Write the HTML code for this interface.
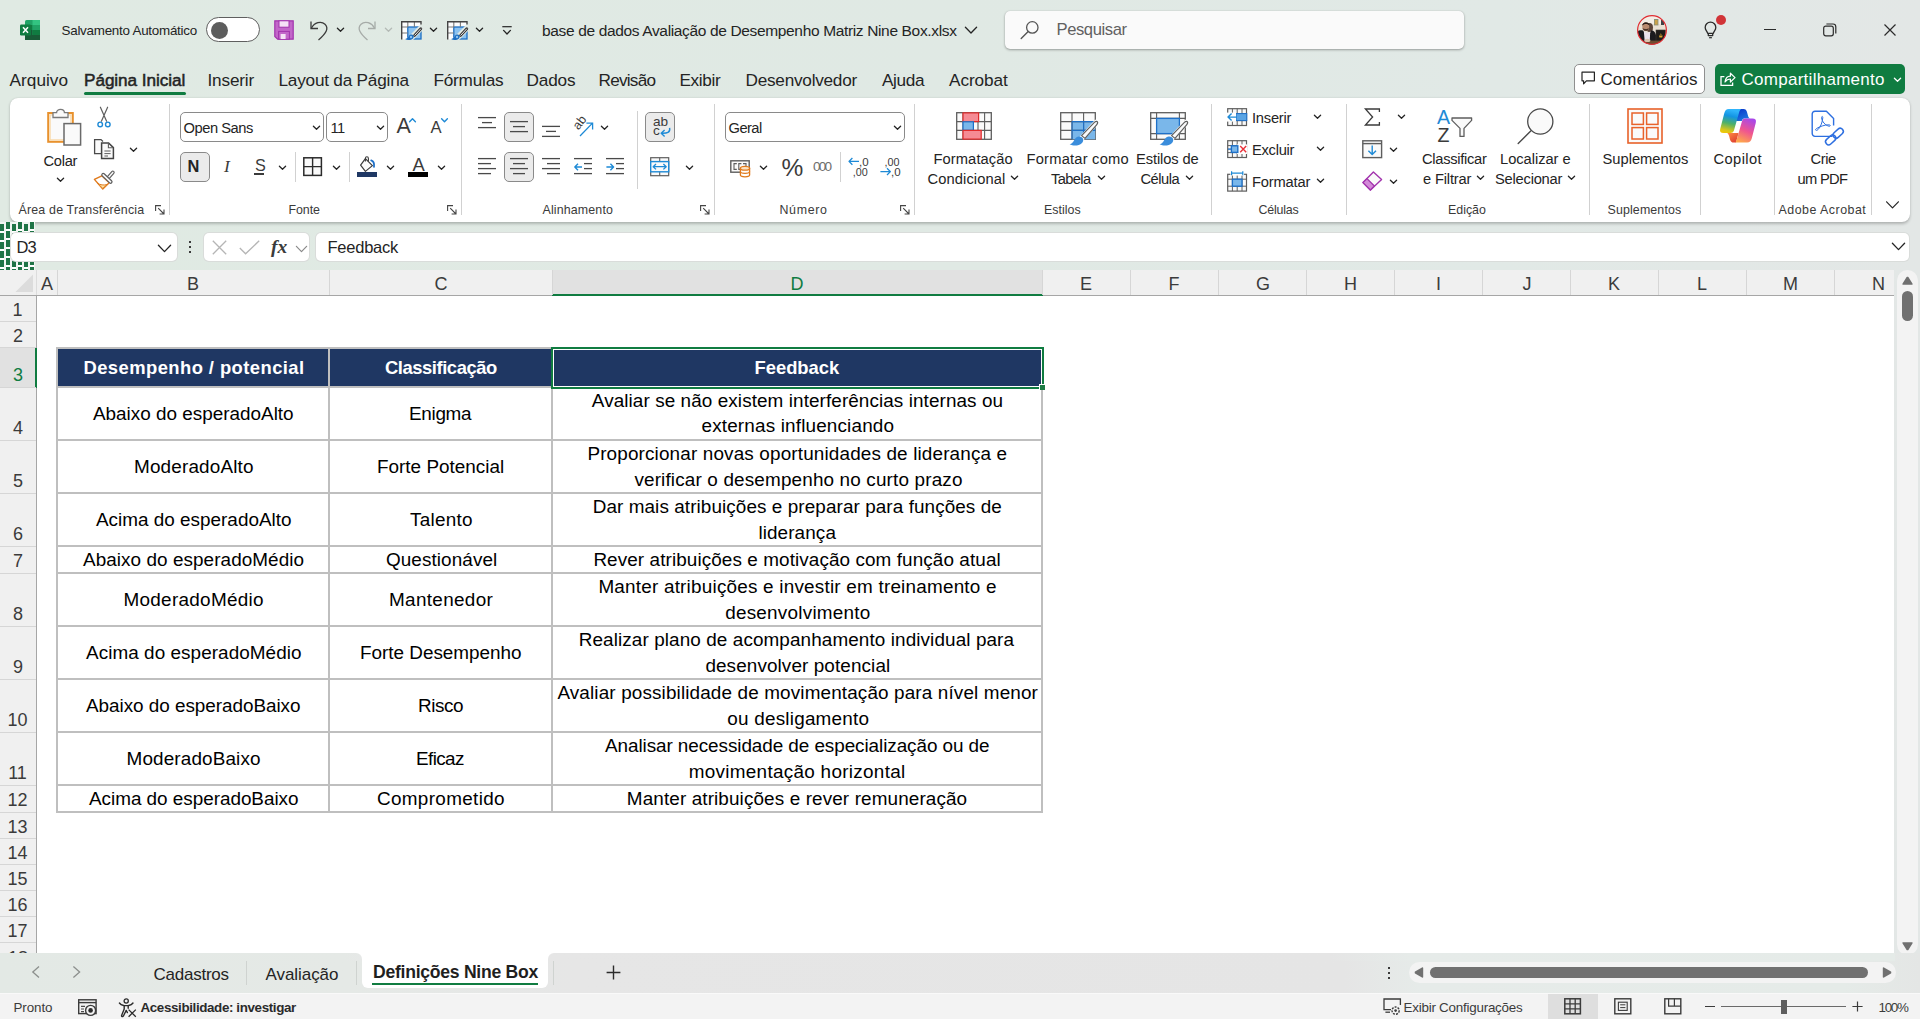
<!doctype html>
<html lang="pt-BR">
<head>
<meta charset="utf-8">
<title>base de dados Avaliação de Desempenho Matriz Nine Box.xlsx - Excel</title>
<style>
html,body{margin:0;padding:0}
body{width:1920px;height:1019px;overflow:hidden;position:relative;font-family:"Liberation Sans",sans-serif;color:#242424;}
.a{position:absolute;box-sizing:border-box}
.t{position:absolute;white-space:pre;line-height:1}
svg{overflow:visible}
</style>
</head>
<body>
<div class="a" style="left:0;top:0;width:1920px;height:1019px;background:linear-gradient(90deg,#e0eae3 0%,#e0e9e4 50%,#e1e9e6 78%,#e3e7e6 100%)"></div>
<header id="titlebar">
<svg class="a" style="left:20px;top:20px;" width="20" height="20" viewBox="0 0 20 20"><rect x="5" y="0" width="15" height="20" rx="1.6" fill="#21a366"/>
<rect x="12.5" y="0" width="7.5" height="5" fill="#33c481"/><rect x="5" y="5" width="7.5" height="5" fill="#107c41"/><rect x="12.5" y="5" width="7.5" height="5" fill="#21a366"/>
<rect x="5" y="10" width="7.5" height="5" fill="#185c37"/><rect x="12.5" y="10" width="7.5" height="5" fill="#107c41"/><rect x="5" y="15" width="15" height="5" fill="#185c37"/>
<rect x="0" y="4.5" width="11" height="11" rx="1.2" fill="#107c41"/>
<path d="M3 7.2 L8 12.8 M8 7.2 L3 12.8" stroke="#fff" stroke-width="1.5" fill="none"/></svg>
<span class="t" style="left:61.50px;top:24.30px;font-size:13.4px;letter-spacing:-0.249px;">Salvamento Automático</span>
<div class="a" style="left:206px;top:17px;width:54px;height:25px;border-radius:13px;border:1px solid #5f5f5f;background:#fff"></div>
<div class="a" style="left:210.5px;top:21.5px;width:17px;height:17px;border-radius:50%;background:#5d5d5d"></div>
<svg class="a" style="left:274px;top:20px;" width="20" height="20" viewBox="0 0 20 20"><path d="M0.8 0.8 H19.2 V19.2 H3.6 L0.8 16.4 Z" fill="#c266c9" stroke="#a233ad" stroke-width="1.2"/>
<rect x="5" y="0.8" width="10" height="6.4" fill="#f5e1f6" stroke="#a233ad" stroke-width="1"/>
<rect x="4.6" y="11.4" width="10.8" height="7.8" fill="#c266c9" stroke="#a233ad" stroke-width="1"/>
<rect x="6.6" y="14" width="5" height="5" fill="#f5e1f6"/></svg>
<svg class="a" style="left:309px;top:19px;" width="20" height="22" viewBox="0 0 20 22"><path d="M2 2.5 V9.5 H9" fill="none" stroke="#3b3b3b" stroke-width="1.3"/><path d="M2.4 9.2 C5.5 3.5 12 1.6 16 5.2 C20 9.2 17.5 14 9.5 21" fill="none" stroke="#3b3b3b" stroke-width="1.3"/></svg>
<svg class="a" style="left:337px;top:28px;" width="7" height="3.6" viewBox="0 0 7 3.6"><path d="M0.4 0.3 L3.5 3.2 L6.6 0.3" fill="none" stroke="#242424" stroke-width="1.3" stroke-linecap="round" stroke-linejoin="round"/></svg>
<svg class="a" style="left:357px;top:19px;" width="20" height="22" viewBox="0 0 20 22"><path d="M18 2.5 V9.5 H11" fill="none" stroke="#a6aba8" stroke-width="1.3"/><path d="M17.6 9.2 C14.5 3.5 8 1.6 4 5.2 C0 9.2 2.5 14 10.5 21" fill="none" stroke="#a6aba8" stroke-width="1.3"/></svg>
<svg class="a" style="left:385px;top:28px;" width="7" height="3.6" viewBox="0 0 7 3.6"><path d="M0.4 0.3 L3.5 3.2 L6.6 0.3" fill="none" stroke="#b4bab6" stroke-width="1.3" stroke-linecap="round" stroke-linejoin="round"/></svg>
<svg class="a" style="left:401px;top:21px;" width="21" height="20" viewBox="0 0 21 20"><rect x="0.6" y="0.6" width="19.4" height="17.6" fill="#fdfdfd"/>
<rect x="6.8" y="6" width="13.2" height="12" fill="#8cc3f0" stroke="#1b6ec2" stroke-width="1.3"/>
<path d="M0.7 6 H6.8 M0.7 12 H6.8 M6.8 0.7 V6 M13.4 0.7 V6" stroke="#7a7a7a" stroke-width="1.1" fill="none"/>
<path d="M0.7 18.4 V0.7 H20 V5.4" stroke="#444" stroke-width="1.4" fill="none"/>
<path d="M22 5 L5.6 21.4" stroke="#e0e9e4" stroke-width="5.6"/>
<path d="M19.8 7.8 L13.6 14.4" stroke="#333" stroke-width="2.8" stroke-linecap="round"/><path d="M19.6 8 L13.8 14.2" stroke="#fff" stroke-width="0.9" stroke-linecap="round"/>
<path d="M4 18 C7.4 18 6.8 14.2 10 13.6 C12.6 13.4 13.6 16 12 17.4 C9.8 19.4 6.4 19.4 4 18 Z" fill="#1b6ec2"/><circle cx="10" cy="16" r="1.2" fill="#8cc3f0"/></svg>
<svg class="a" style="left:430px;top:28px;" width="7" height="3.6" viewBox="0 0 7 3.6"><path d="M0.4 0.3 L3.5 3.2 L6.6 0.3" fill="none" stroke="#242424" stroke-width="1.3" stroke-linecap="round" stroke-linejoin="round"/></svg>
<svg class="a" style="left:447px;top:21px;" width="21" height="20" viewBox="0 0 21 20"><rect x="0.6" y="0.6" width="19.4" height="17.6" fill="#fdfdfd"/>
<rect x="6.8" y="6" width="13.2" height="12" fill="#8cc3f0" stroke="#1b6ec2" stroke-width="1.3"/>
<path d="M0.7 6 H6.8 M0.7 12 H6.8 M6.8 0.7 V6 M13.4 0.7 V6" stroke="#7a7a7a" stroke-width="1.1" fill="none"/>
<path d="M0.7 18.4 V0.7 H20 V5.4" stroke="#444" stroke-width="1.4" fill="none"/>
<path d="M22 5 L5.6 21.4" stroke="#e0e9e4" stroke-width="5.6"/>
<path d="M19.8 7.8 L13.6 14.4" stroke="#333" stroke-width="2.8" stroke-linecap="round"/><path d="M19.6 8 L13.8 14.2" stroke="#fff" stroke-width="0.9" stroke-linecap="round"/>
<path d="M4 18 C7.4 18 6.8 14.2 10 13.6 C12.6 13.4 13.6 16 12 17.4 C9.8 19.4 6.4 19.4 4 18 Z" fill="#1b6ec2"/><circle cx="10" cy="16" r="1.2" fill="#8cc3f0"/></svg>
<svg class="a" style="left:476px;top:28px;" width="7" height="3.6" viewBox="0 0 7 3.6"><path d="M0.4 0.3 L3.5 3.2 L6.6 0.3" fill="none" stroke="#242424" stroke-width="1.3" stroke-linecap="round" stroke-linejoin="round"/></svg>
<svg class="a" style="left:502px;top:26px;" width="10" height="10" viewBox="0 0 10 10"><path d="M0.3 0.7 H9.7" stroke="#242424" stroke-width="1.2"/><path d="M1.6 4.4 L5 8 L8.4 4.4" fill="none" stroke="#242424" stroke-width="1.3" stroke-linecap="round" stroke-linejoin="round"/></svg>
<span class="t" style="left:542.00px;top:23.00px;font-size:15.5px;letter-spacing:-0.350px;">base de dados Avaliação de Desempenho Matriz Nine Box.xlsx</span>
<svg class="a" style="left:964.5px;top:27px;" width="12" height="6.4" viewBox="0 0 12 6.4"><path d="M0.4 0.3 L6.0 6.0 L11.6 0.3" fill="none" stroke="#242424" stroke-width="1.3" stroke-linecap="round" stroke-linejoin="round"/></svg>
<div class="a" style="left:1005px;top:11px;width:459px;height:38px;border-radius:5px;background:#fafafa;box-shadow:0 1px 2.5px rgba(0,0,0,.32),0 0 1px rgba(0,0,0,.18)"></div>
<svg class="a" style="left:1020px;top:20px;" width="20" height="20" viewBox="0 0 20 20"><circle cx="12.3" cy="7.4" r="5.7" fill="none" stroke="#555" stroke-width="1.3"/><path d="M8.2 11.6 L1.2 18.6" stroke="#555" stroke-width="1.4" stroke-linecap="round"/></svg>
<span class="t" style="left:1056.50px;top:22.20px;font-size:16.6px;color:#616161;letter-spacing:-0.408px;">Pesquisar</span>
<svg class="a" style="left:1637px;top:15px;" width="30" height="30" viewBox="0 0 30 30"><defs><clipPath id="avc"><circle cx="15" cy="15" r="14.4"/></clipPath></defs>
<g clip-path="url(#avc)"><rect width="30" height="30" fill="#e9e1d4"/>
<rect x="0" y="0" width="30" height="9" fill="#f3eee6"/>
<rect x="17" y="4" width="4.4" height="6.4" fill="#8a8f7a"/><rect x="17.8" y="5" width="2.8" height="4.6" fill="#c9a24a"/><rect x="24" y="5" width="3" height="5" fill="#3d4347"/>
<ellipse cx="12.6" cy="12.6" rx="3.4" ry="4.6" fill="#5a4338"/>
<path d="M-1 30 V17.5 C1 15.4 4 15 6 15.6 L11 22 L14.4 15.2 C17 15.6 18.4 17.4 19 20 V30 Z" fill="#1b1b1e"/>
<path d="M6.8 16 L8 30 H12.6 L13.2 16.4 C11 18.2 8.8 18 6.8 16 Z" fill="#ebe3ec"/>
<ellipse cx="8.8" cy="11.8" rx="3.5" ry="4.3" fill="#b98a6e"/>
<path d="M5.2 10.8 C4.8 6.4 12.6 5.8 12.4 10.6 C11 8.6 7 8.4 5.2 10.8 Z" fill="#2a1d18"/>
<path d="M5.6 13 C6.4 16.8 11.2 16.8 12 13 C10.6 14.4 7 14.4 5.6 13 Z" fill="#4a3328"/>
<rect x="19" y="15" width="9.4" height="12" fill="#1e1c19" stroke="#3a362f" stroke-width=".6"/>
<path d="M22 20.6 H25.6 L25.2 22.4 H22.4 Z M22.6 19.4 L23.8 18.4 L25 19.4 Z" fill="#d6a332"/>
<rect x="8" y="25.6" width="22" height="5" fill="#6d4b30"/><ellipse cx="10.4" cy="25.4" rx="3" ry="1.7" fill="#d9c4b0"/></g>
<circle cx="15" cy="15" r="14.4" fill="none" stroke="#e02d33" stroke-width="1.2"/></svg>
<svg class="a" style="left:1704px;top:21px;" width="14" height="18" viewBox="0 0 14 18"><path d="M6.5 1.2 C3.4 1.2 1.2 3.6 1.2 6.4 C1.2 8.8 2.8 10 3.8 12.4 H9.2 C10.2 10 11.8 8.8 11.8 6.4 C11.8 3.6 9.6 1.2 6.5 1.2 Z M4.3 12.4 V14.6 H8.7 V12.4" fill="none" stroke="#2b2b2b" stroke-width="1.3" stroke-linejoin="round"/><path d="M5.1 16.7 H7.9" stroke="#2b2b2b" stroke-width="1.2"/></svg>
<div class="a" style="left:1716px;top:15px;width:10px;height:10px;border-radius:50%;background:#d13438"></div>
<div class="a" style="left:1764px;top:29px;width:12px;height:1.2px;background:#2b2b2b;"></div>
<svg class="a" style="left:1823px;top:23px;" width="14" height="14" viewBox="0 0 14 14"><rect x="0.7" y="3.2" width="9.6" height="9.6" rx="2" fill="none" stroke="#2b2b2b" stroke-width="1.2"/><path d="M3.4 1 H10 Q12.8 1 12.8 3.8 V10.4" fill="none" stroke="#2b2b2b" stroke-width="1.2"/></svg>
<svg class="a" style="left:1884px;top:24px;" width="12" height="12" viewBox="0 0 12 12"><path d="M0.5 0.5 L11.5 11.5 M11.5 0.5 L0.5 11.5" stroke="#2b2b2b" stroke-width="1.2"/></svg>
</header>
<nav id="ribbon-tabs">
<span class="t" style="left:9.50px;top:72.00px;font-size:17.2px;letter-spacing:0.047px;">Arquivo</span>
<span class="t" style="left:84.00px;top:72.00px;font-size:17.2px;letter-spacing:-0.071px;-webkit-text-stroke:0.5px #242424;">Página Inicial</span>
<span class="t" style="left:207.50px;top:72.00px;font-size:17.2px;letter-spacing:-0.171px;">Inserir</span>
<span class="t" style="left:278.50px;top:72.00px;font-size:17.2px;letter-spacing:-0.215px;">Layout da Página</span>
<span class="t" style="left:433.50px;top:72.00px;font-size:17.2px;letter-spacing:-0.219px;">Fórmulas</span>
<span class="t" style="left:526.50px;top:72.00px;font-size:17.2px;letter-spacing:-0.147px;">Dados</span>
<span class="t" style="left:598.50px;top:72.00px;font-size:17.2px;letter-spacing:-0.756px;">Revisão</span>
<span class="t" style="left:679.50px;top:72.00px;font-size:17.2px;letter-spacing:-0.351px;">Exibir</span>
<span class="t" style="left:745.50px;top:72.00px;font-size:17.2px;letter-spacing:-0.244px;">Desenvolvedor</span>
<span class="t" style="left:882.00px;top:72.00px;font-size:17.2px;letter-spacing:-0.350px;">Ajuda</span>
<span class="t" style="left:949.00px;top:72.00px;font-size:17.2px;letter-spacing:-0.076px;">Acrobat</span>
<div class="a" style="left:84px;top:91.5px;width:102px;height:3px;border-radius:1.5px;background:#107c41"></div>
<div class="a" style="left:1574px;top:64px;width:131px;height:30px;border-radius:5px;background:#fff;border:1px solid #8f8f8f"></div>
<svg class="a" style="left:1581px;top:71px;" width="15" height="15" viewBox="0 0 15 15"><path d="M1 1.2 H13.4 V9.8 H5.4 L2.6 12.8 V9.8 H1 Z" fill="none" stroke="#242424" stroke-width="1.2" stroke-linejoin="round"/></svg>
<span class="t" style="left:1600.50px;top:71.10px;font-size:17px;letter-spacing:0.063px;">Comentários</span>
<div class="a" style="left:1715px;top:64px;width:190px;height:30px;border-radius:5px;background:#107c41"></div>
<svg class="a" style="left:1720px;top:70px;" width="16" height="17" viewBox="0 0 16 17"><path d="M4.4 6.6 H1 V15.4 H12.6 V12.4" fill="none" stroke="#fff" stroke-width="1.3"/><path d="M5 12 C5.6 8 8 6.2 10.4 6.2 V3.2 L15 7.6 L10.4 12 V9 C8 9 6.4 10 5 12 Z" fill="none" stroke="#fff" stroke-width="1.2" stroke-linejoin="round"/></svg>
<span class="t" style="left:1741.50px;top:71.10px;font-size:17px;color:#fff;letter-spacing:0.271px;">Compartilhamento</span>
<svg class="a" style="left:1893.5px;top:77.5px;" width="7" height="3.6" viewBox="0 0 7 3.6"><path d="M0.4 0.3 L3.5 3.2 L6.6 0.3" fill="none" stroke="#fff" stroke-width="1.3" stroke-linecap="round" stroke-linejoin="round"/></svg>
</nav>
<section id="ribbon">
<div class="a" style="left:10px;top:98px;width:1900px;height:124px;border-radius:8px;background:#fff;box-shadow:0 1.5px 3px rgba(0,0,0,.22),0 0 1px rgba(0,0,0,.12)"></div>
<div class="a" style="left:169px;top:104px;width:1px;height:111px;background:#d1d1d1;"></div>
<div class="a" style="left:461px;top:104px;width:1px;height:111px;background:#d1d1d1;"></div>
<div class="a" style="left:714px;top:104px;width:1px;height:111px;background:#d1d1d1;"></div>
<div class="a" style="left:914px;top:104px;width:1px;height:111px;background:#d1d1d1;"></div>
<div class="a" style="left:1211px;top:104px;width:1px;height:111px;background:#d1d1d1;"></div>
<div class="a" style="left:1346px;top:104px;width:1px;height:111px;background:#d1d1d1;"></div>
<div class="a" style="left:1589px;top:104px;width:1px;height:111px;background:#d1d1d1;"></div>
<div class="a" style="left:1700px;top:104px;width:1px;height:111px;background:#d1d1d1;"></div>
<div class="a" style="left:1774px;top:104px;width:1px;height:111px;background:#d1d1d1;"></div>
<div class="a" style="left:1871px;top:104px;width:1px;height:111px;background:#d1d1d1;"></div>
<div class="a" style="left:295px;top:152px;width:1px;height:30px;background:#d1d1d1;"></div>
<div class="a" style="left:349px;top:152px;width:1px;height:30px;background:#d1d1d1;"></div>
<div class="a" style="left:637px;top:111px;width:1px;height:78px;background:#d1d1d1;"></div>
<div class="a" style="left:840px;top:152px;width:1px;height:30px;background:#d1d1d1;"></div>
<span class="t" style="left:18.50px;top:204.40px;font-size:12.4px;color:#3a3a3a;letter-spacing:0.188px;">Área de Transferência</span>
<span class="t" style="left:288.50px;top:204.40px;font-size:12.4px;color:#3a3a3a;letter-spacing:-0.073px;">Fonte</span>
<span class="t" style="left:542.50px;top:204.40px;font-size:12.4px;color:#3a3a3a;letter-spacing:0.151px;">Alinhamento</span>
<span class="t" style="left:779.50px;top:204.40px;font-size:12.4px;color:#3a3a3a;letter-spacing:0.664px;">Número</span>
<span class="t" style="left:1044.00px;top:204.40px;font-size:12.4px;color:#3a3a3a;letter-spacing:0.034px;">Estilos</span>
<span class="t" style="left:1258.50px;top:204.40px;font-size:12.4px;color:#3a3a3a;letter-spacing:-0.188px;">Células</span>
<span class="t" style="left:1448.00px;top:204.40px;font-size:12.4px;color:#3a3a3a;">Edição</span>
<span class="t" style="left:1607.50px;top:204.40px;font-size:12.4px;color:#3a3a3a;letter-spacing:0.137px;">Suplementos</span>
<span class="t" style="left:1778.50px;top:204.40px;font-size:12.4px;color:#3a3a3a;letter-spacing:0.497px;">Adobe Acrobat</span>
<svg class="a" style="left:155px;top:205px;" width="10" height="10" viewBox="0 0 10 10"><path d="M0.6 6 V0.6 H6" fill="none" stroke="#444" stroke-width="1.1"/><path d="M3.2 3.2 L9 9 M9 4.6 V9 H4.6" fill="none" stroke="#444" stroke-width="1.1"/></svg>
<svg class="a" style="left:447px;top:205px;" width="10" height="10" viewBox="0 0 10 10"><path d="M0.6 6 V0.6 H6" fill="none" stroke="#444" stroke-width="1.1"/><path d="M3.2 3.2 L9 9 M9 4.6 V9 H4.6" fill="none" stroke="#444" stroke-width="1.1"/></svg>
<svg class="a" style="left:700px;top:205px;" width="10" height="10" viewBox="0 0 10 10"><path d="M0.6 6 V0.6 H6" fill="none" stroke="#444" stroke-width="1.1"/><path d="M3.2 3.2 L9 9 M9 4.6 V9 H4.6" fill="none" stroke="#444" stroke-width="1.1"/></svg>
<svg class="a" style="left:900px;top:205px;" width="10" height="10" viewBox="0 0 10 10"><path d="M0.6 6 V0.6 H6" fill="none" stroke="#444" stroke-width="1.1"/><path d="M3.2 3.2 L9 9 M9 4.6 V9 H4.6" fill="none" stroke="#444" stroke-width="1.1"/></svg>
<svg class="a" style="left:1886px;top:201px;" width="13" height="8" viewBox="0 0 13 8"><path d="M0.6 0.8 L6.5 6.8 L12.4 0.8" fill="none" stroke="#242424" stroke-width="1.2" stroke-linecap="round" stroke-linejoin="round"/></svg>
<svg class="a" style="left:47px;top:107px;" width="35" height="40" viewBox="0 0 35 40"><rect x="1.2" y="6" width="24.6" height="28.8" fill="#fdf3e3" stroke="#e8912d" stroke-width="2"/>
<rect x="3.2" y="8" width="20.6" height="24.8" fill="#fafafa" stroke="#f8d9a8" stroke-width="1"/>
<path d="M6 10.5 V5.6 H9.6 C9.6 1.4 17.4 1.4 17.4 5.6 H21 V10.5 Z" fill="#fafafa" stroke="#7a7a7a" stroke-width="1.3"/>
<rect x="17" y="16.6" width="16.6" height="21.4" fill="#fafafa" stroke="#6a6a6a" stroke-width="1.5"/></svg>
<span class="t" style="left:43.50px;top:154.00px;font-size:14.7px;letter-spacing:-0.302px;">Colar</span>
<svg class="a" style="left:57px;top:178px;" width="7" height="3.6" viewBox="0 0 7 3.6"><path d="M0.4 0.3 L3.5 3.2 L6.6 0.3" fill="none" stroke="#242424" stroke-width="1.3" stroke-linecap="round" stroke-linejoin="round"/></svg>
<svg class="a" style="left:96px;top:106px;" width="16" height="22" viewBox="0 0 16 22"><path d="M4.4 1.2 L10.6 15.2 M11.6 1.2 L5.4 15.2" stroke="#5e5e5e" stroke-width="1.2" stroke-linecap="round"/>
<circle cx="4.2" cy="18.4" r="2.3" fill="none" stroke="#1e8ad6" stroke-width="1.4"/><circle cx="11.8" cy="18.4" r="2.3" fill="none" stroke="#1e8ad6" stroke-width="1.4"/></svg>
<svg class="a" style="left:93px;top:138px;" width="22" height="22" viewBox="0 0 22 22"><path d="M8.4 15.6 H1.6 V1.6 H8 L10 3.4" fill="#fafafa" stroke="#4a4a4a" stroke-width="1.3"/>
<path d="M8.6 5 H15.6 L20.4 9.6 V20.4 H8.6 Z" fill="#fafafa" stroke="#444" stroke-width="1.5"/>
<path d="M15.4 5.2 V9.8 H20.2" fill="none" stroke="#5e5e5e" stroke-width="1.1"/><path d="M11.4 13 H17.6 M11.4 15.6 H17.6 M11.4 18 H15" stroke="#5e5e5e" stroke-width="1"/></svg>
<svg class="a" style="left:130px;top:148px;" width="7" height="3.6" viewBox="0 0 7 3.6"><path d="M0.4 0.3 L3.5 3.2 L6.6 0.3" fill="none" stroke="#242424" stroke-width="1.3" stroke-linecap="round" stroke-linejoin="round"/></svg>
<svg class="a" style="left:93px;top:170px;" width="22" height="22" viewBox="0 0 22 22"><path d="M8.8 5.8 L1.4 9.4 L9.8 19 L16.2 12.8 Z" fill="#fff" stroke="#e07a1c" stroke-width="1.4" stroke-linejoin="round"/>
<path d="M4.6 13.4 L9.8 18.4 L14 14.6 C10.6 15.4 7.4 15 4.6 13.4 Z" fill="#fde3a6" stroke="#e07a1c" stroke-width="1"/>
<path d="M19.8 2.4 L15.6 7.2" stroke="#5e5e5e" stroke-width="3.8" stroke-linecap="round"/><path d="M19.8 2.4 L15.6 7.2" stroke="#fafafa" stroke-width="1.5" stroke-linecap="round"/>
<path d="M10.2 4.8 L17.6 11.8" stroke="#5e5e5e" stroke-width="4" stroke-linecap="round"/><path d="M10.2 4.8 L17.6 11.8" stroke="#fafafa" stroke-width="1.6" stroke-linecap="round"/></svg>
<div class="a" style="left:180px;top:112px;width:144px;height:30px;border-radius:5px;background:#fff;border:1px solid #8a8a8a"></div>
<span class="t" style="left:183.50px;top:120.80px;font-size:14.7px;letter-spacing:-0.455px;">Open Sans</span>
<svg class="a" style="left:313px;top:125.5px;" width="7" height="3.6" viewBox="0 0 7 3.6"><path d="M0.4 0.3 L3.5 3.2 L6.6 0.3" fill="none" stroke="#242424" stroke-width="1.3" stroke-linecap="round" stroke-linejoin="round"/></svg>
<div class="a" style="left:326px;top:112px;width:62px;height:30px;border-radius:5px;background:#fff;border:1px solid #8a8a8a"></div>
<span class="t" style="left:330.50px;top:120.80px;font-size:14.7px;letter-spacing:-0.577px;">11</span>
<svg class="a" style="left:377px;top:125.5px;" width="7" height="3.6" viewBox="0 0 7 3.6"><path d="M0.4 0.3 L3.5 3.2 L6.6 0.3" fill="none" stroke="#242424" stroke-width="1.3" stroke-linecap="round" stroke-linejoin="round"/></svg>
<span class="t" style="left:396.50px;top:116.00px;font-size:21.5px;color:#3b3b3b;">A</span>
<svg class="a" style="left:409px;top:118px;" width="7" height="4.4" viewBox="0 0 7 4.4"><path d="M0.6 3.8 L3.5 0.8 L6.4 3.8" fill="none" stroke="#1e8ad6" stroke-width="1.4" stroke-linecap="round" stroke-linejoin="round"/></svg>
<span class="t" style="left:430.50px;top:120.00px;font-size:16.6px;color:#3b3b3b;">A</span>
<svg class="a" style="left:441px;top:118px;" width="7" height="4.4" viewBox="0 0 7 4.4"><path d="M0.6 0.8 L3.5 3.8 L6.4 0.8" fill="none" stroke="#1e8ad6" stroke-width="1.4" stroke-linecap="round" stroke-linejoin="round"/></svg>
<div class="a" style="left:180px;top:152px;width:30px;height:30px;border-radius:5px;background:#ebebeb;border:1px solid #8a8a8a"></div>
<span class="t" style="left:187.50px;top:157.60px;font-size:16.4px;font-weight:700;">N</span>
<span class="t" style="left:224.00px;top:157.60px;font-size:17.4px;color:#3b3b3b;font-family:'Liberation Serif', serif;font-style:italic;">I</span>
<span class="t" style="left:255.00px;top:157.00px;font-size:16.2px;color:#3b3b3b;">S</span>
<div class="a" style="left:254px;top:173.4px;width:10.4px;height:1.2px;background:#3b3b3b;"></div>
<svg class="a" style="left:279px;top:165.5px;" width="7" height="3.6" viewBox="0 0 7 3.6"><path d="M0.4 0.3 L3.5 3.2 L6.6 0.3" fill="none" stroke="#242424" stroke-width="1.3" stroke-linecap="round" stroke-linejoin="round"/></svg>
<svg class="a" style="left:303px;top:157px;" width="20" height="20" viewBox="0 0 20 20"><rect x="0.8" y="0.8" width="17.6" height="17.6" fill="#fafafa" stroke="#2b2b2b" stroke-width="1.5"/><path d="M9.6 0.8 V18.4 M0.8 9.6 H18.4" stroke="#2b2b2b" stroke-width="1.4"/></svg>
<svg class="a" style="left:333px;top:165.5px;" width="7" height="3.6" viewBox="0 0 7 3.6"><path d="M0.4 0.3 L3.5 3.2 L6.6 0.3" fill="none" stroke="#242424" stroke-width="1.3" stroke-linecap="round" stroke-linejoin="round"/></svg>
<svg class="a" style="left:357px;top:156px;" width="21" height="17" viewBox="0 0 21 17"><path d="M8.4 2.6 L15.4 9.6 L8.4 15.4 L3.6 9.2 Z" fill="#fafafa" stroke="#3b3b3b" stroke-width="1.2" stroke-linejoin="round"/>
<path d="M8.4 5.4 V2.4 C8.4 0.2 11.4 0.2 11.4 2.4 V5.6" fill="none" stroke="#3b3b3b" stroke-width="1.1"/>
<path d="M14.2 4.4 C16.6 5.2 17.4 7.6 17 10.8" fill="none" stroke="#1e70c8" stroke-width="1.8" stroke-linecap="round"/></svg>
<div class="a" style="left:357px;top:172px;width:20px;height:5px;background:#1f3864;"></div>
<svg class="a" style="left:387px;top:165.5px;" width="7" height="3.6" viewBox="0 0 7 3.6"><path d="M0.4 0.3 L3.5 3.2 L6.6 0.3" fill="none" stroke="#242424" stroke-width="1.3" stroke-linecap="round" stroke-linejoin="round"/></svg>
<span class="t" style="left:412.50px;top:155.60px;font-size:18.4px;color:#3b3b3b;">A</span>
<div class="a" style="left:408px;top:172px;width:20px;height:5px;background:#000;"></div>
<svg class="a" style="left:438px;top:165.5px;" width="7" height="3.6" viewBox="0 0 7 3.6"><path d="M0.4 0.3 L3.5 3.2 L6.6 0.3" fill="none" stroke="#242424" stroke-width="1.3" stroke-linecap="round" stroke-linejoin="round"/></svg>
<svg class="a" style="left:0;top:0" width="1" height="1"><rect x="478" y="116.95" width="18" height="1.3" fill="#4a4a4a"/><rect x="482" y="121.95" width="10" height="1.3" fill="#4a4a4a"/><rect x="478" y="126.95" width="18" height="1.3" fill="#4a4a4a"/></svg>
<div class="a" style="left:504px;top:112px;width:30px;height:30px;border-radius:5px;background:#ebebeb;border:1px solid #8a8a8a"></div>
<svg class="a" style="left:0;top:0" width="1" height="1"><rect x="510" y="120.95" width="18" height="1.3" fill="#4a4a4a"/><rect x="513" y="125.95" width="12" height="1.3" fill="#4a4a4a"/><rect x="510" y="130.95" width="18" height="1.3" fill="#4a4a4a"/></svg>
<svg class="a" style="left:0;top:0" width="1" height="1"><rect x="542" y="125.75" width="18" height="1.3" fill="#4a4a4a"/><rect x="546" y="130.75" width="10" height="1.3" fill="#4a4a4a"/><rect x="542" y="135.75" width="18" height="1.3" fill="#4a4a4a"/></svg>
<svg class="a" style="left:572.5px;top:114.6px;" width="24" height="24" viewBox="0 0 24 24"><text x="0" y="0" font-family="Liberation Sans, sans-serif" font-size="12.5" fill="#3b3b3b" transform="translate(5.5,15.5) rotate(-52)">ab</text>
<path d="M7 21 L19 8.6 M13.4 8.2 H19.6 V14.4" fill="none" stroke="#1e8ad6" stroke-width="1.3"/></svg>
<svg class="a" style="left:601px;top:126px;" width="7" height="3.6" viewBox="0 0 7 3.6"><path d="M0.4 0.3 L3.5 3.2 L6.6 0.3" fill="none" stroke="#242424" stroke-width="1.3" stroke-linecap="round" stroke-linejoin="round"/></svg>
<svg class="a" style="left:0;top:0" width="1" height="1"><rect x="478" y="157.95" width="18" height="1.3" fill="#4a4a4a"/><rect x="478" y="162.95" width="13" height="1.3" fill="#4a4a4a"/><rect x="478" y="167.95" width="18" height="1.3" fill="#4a4a4a"/><rect x="478" y="172.95" width="13" height="1.3" fill="#4a4a4a"/></svg>
<div class="a" style="left:504px;top:152px;width:30px;height:30px;border-radius:5px;background:#ebebeb;border:1px solid #8a8a8a"></div>
<svg class="a" style="left:0;top:0" width="1" height="1"><rect x="510" y="157.95" width="18" height="1.3" fill="#4a4a4a"/><rect x="513" y="162.95" width="12" height="1.3" fill="#4a4a4a"/><rect x="510" y="167.95" width="18" height="1.3" fill="#4a4a4a"/><rect x="513" y="172.95" width="12" height="1.3" fill="#4a4a4a"/></svg>
<svg class="a" style="left:0;top:0" width="1" height="1"><rect x="542" y="157.95" width="18" height="1.3" fill="#4a4a4a"/><rect x="547" y="162.95" width="13" height="1.3" fill="#4a4a4a"/><rect x="542" y="167.95" width="18" height="1.3" fill="#4a4a4a"/><rect x="547" y="172.95" width="13" height="1.3" fill="#4a4a4a"/></svg>
<svg class="a" style="left:0;top:0" width="1" height="1"><rect x="574" y="157.95" width="18" height="1.3" fill="#4a4a4a"/><rect x="584" y="162.95" width="8" height="1.3" fill="#4a4a4a"/><rect x="584" y="167.95" width="8" height="1.3" fill="#4a4a4a"/><rect x="574" y="172.95" width="18" height="1.3" fill="#4a4a4a"/></svg>
<svg class="a" style="left:574px;top:162.5px;" width="9" height="8" viewBox="0 0 9 8"><path d="M0.8 4 H8 M4 0.8 L0.8 4 L4 7.2" fill="none" stroke="#1e8ad6" stroke-width="1.4" stroke-linejoin="round"/></svg>
<svg class="a" style="left:0;top:0" width="1" height="1"><rect x="606" y="157.95" width="18" height="1.3" fill="#4a4a4a"/><rect x="616" y="162.95" width="8" height="1.3" fill="#4a4a4a"/><rect x="616" y="167.95" width="8" height="1.3" fill="#4a4a4a"/><rect x="606" y="172.95" width="18" height="1.3" fill="#4a4a4a"/></svg>
<svg class="a" style="left:606px;top:162.5px;" width="9" height="8" viewBox="0 0 9 8"><path d="M0.4 4 H7.6 M4.4 0.8 L7.6 4 L4.4 7.2" fill="none" stroke="#1e8ad6" stroke-width="1.4" stroke-linejoin="round"/></svg>
<div class="a" style="left:645px;top:112px;width:30px;height:30px;border-radius:5px;background:#ebebeb;border:1px solid #8a8a8a"></div>
<span class="t" style="left:653.00px;top:114.60px;font-size:13.6px;color:#3b3b3b;letter-spacing:-0.060px;">ab</span>
<span class="t" style="left:653.00px;top:124.00px;font-size:13.6px;color:#3b3b3b;">c</span>
<svg class="a" style="left:660px;top:127px;" width="11" height="10" viewBox="0 0 11 10"><path d="M9.6 0.8 C10.6 5.6 7 6.4 1.6 6.2 M4.6 3 L1.2 6.2 L4.6 9.4" fill="none" stroke="#1e8ad6" stroke-width="1.4" stroke-linejoin="round"/></svg>
<svg class="a" style="left:650px;top:157px;" width="20" height="20" viewBox="0 0 20 20"><rect x="0.7" y="0.7" width="18" height="18" fill="#fafafa" stroke="#5e5e5e" stroke-width="1.2"/><path d="M9.7 0.7 V19" stroke="#5e5e5e" stroke-width="1.1"/>
<rect x="0.7" y="4.6" width="18" height="10.2" fill="#fafafa" stroke="#1e8ad6" stroke-width="1.4"/>
<path d="M3.4 9.7 H16 M6 7 L3.2 9.7 L6 12.4 M13.4 7 L16.2 9.7 L13.4 12.4" fill="none" stroke="#1e8ad6" stroke-width="1.3" stroke-linejoin="round"/></svg>
<svg class="a" style="left:685.5px;top:165.5px;" width="7" height="3.6" viewBox="0 0 7 3.6"><path d="M0.4 0.3 L3.5 3.2 L6.6 0.3" fill="none" stroke="#242424" stroke-width="1.3" stroke-linecap="round" stroke-linejoin="round"/></svg>
<div class="a" style="left:725px;top:112px;width:180px;height:30px;border-radius:5px;background:#fff;border:1px solid #8a8a8a"></div>
<span class="t" style="left:728.50px;top:120.80px;font-size:14.7px;letter-spacing:-0.538px;">Geral</span>
<svg class="a" style="left:894px;top:125.5px;" width="7" height="3.6" viewBox="0 0 7 3.6"><path d="M0.4 0.3 L3.5 3.2 L6.6 0.3" fill="none" stroke="#242424" stroke-width="1.3" stroke-linecap="round" stroke-linejoin="round"/></svg>
<svg class="a" style="left:730px;top:160px;" width="21" height="18" viewBox="0 0 21 18"><rect x="0.8" y="0.8" width="18.4" height="11.4" fill="#fafafa" stroke="#5e5e5e" stroke-width="1.4"/>
<path d="M6.8 3.6 H4 V9.4 H6.8 M11.4 3.6 H8.8 V9.4 H11.4 M13 3.6 H16 V6" fill="none" stroke="#5e5e5e" stroke-width="1.1"/>
<path d="M10.4 8.4 V15 C10.4 17.4 19.6 17.4 19.6 15 V8.4 Z" fill="#fff" stroke="#e07a1c" stroke-width="1.3"/>
<ellipse cx="15" cy="8.2" rx="4.6" ry="1.9" fill="#fde3c3" stroke="#e07a1c" stroke-width="1.3"/>
<path d="M10.4 11.6 C10.4 14 19.6 14 19.6 11.6" fill="none" stroke="#e07a1c" stroke-width="1.2"/></svg>
<svg class="a" style="left:760px;top:165.5px;" width="7" height="3.6" viewBox="0 0 7 3.6"><path d="M0.4 0.3 L3.5 3.2 L6.6 0.3" fill="none" stroke="#242424" stroke-width="1.3" stroke-linecap="round" stroke-linejoin="round"/></svg>
<span class="t" style="left:781.50px;top:155.80px;font-size:24.5px;color:#3b3b3b;">%</span>
<span class="t" style="left:813.00px;top:160.00px;font-size:13.6px;color:#6e6e6e;letter-spacing:-1.810px;">000</span>
<svg class="a" style="left:848px;top:154.8px;" width="22" height="22" viewBox="0 0 22 22"><text x="11" y="10.6" font-family="Liberation Sans, sans-serif" font-size="11" fill="#3b3b3b" textLength="9.6" lengthAdjust="spacingAndGlyphs">,0</text>
<text x="4.8" y="20.8" font-family="Liberation Sans, sans-serif" font-size="11" fill="#3b3b3b" textLength="15" lengthAdjust="spacingAndGlyphs">,00</text>
<path d="M1 6.4 H11 M4.4 3 L1 6.4 L4.4 9.8" fill="none" stroke="#1e8ad6" stroke-width="1.3" stroke-linejoin="round"/></svg>
<svg class="a" style="left:880px;top:154.8px;" width="22" height="22" viewBox="0 0 22 22"><text x="4.6" y="10.6" font-family="Liberation Sans, sans-serif" font-size="11" fill="#3b3b3b" textLength="15" lengthAdjust="spacingAndGlyphs">,00</text>
<text x="11" y="20.8" font-family="Liberation Sans, sans-serif" font-size="11" fill="#3b3b3b" textLength="9.6" lengthAdjust="spacingAndGlyphs">,0</text>
<path d="M0.4 16.6 H10.4 M7 13.2 L10.4 16.6 L7 20" fill="none" stroke="#1e8ad6" stroke-width="1.3" stroke-linejoin="round"/></svg>
<svg class="a" style="left:956px;top:112px;" width="36" height="28" viewBox="0 0 36 28"><rect x="0.7" y="0.7" width="34.6" height="26.6" fill="#fafafa" stroke="#5e5e5e" stroke-width="1.3"/>
<path d="M0.7 9.6 H35.3 M0.7 18.4 H35.3 M7 0.7 V27.3 M22 0.7 V27.3 M28.6 0.7 V27.3" stroke="#5e5e5e" stroke-width="1.1"/>
<rect x="7" y="0.9" width="15.6" height="8.7" fill="#f58b94" stroke="#e02b2b" stroke-width="1.2"/>
<rect x="7" y="9.8" width="10.4" height="8.4" fill="#7ab7ea" stroke="#1e70c8" stroke-width="1.2"/>
<rect x="7" y="18.4" width="18.2" height="8.7" fill="#f58b94" stroke="#e02b2b" stroke-width="1.2"/></svg>
<span class="t" style="left:933.50px;top:152.00px;font-size:14.7px;letter-spacing:0.089px;">Formatação</span>
<span class="t" style="left:927.50px;top:172.00px;font-size:14.7px;letter-spacing:0.101px;">Condicional</span>
<svg class="a" style="left:1011px;top:176.4px;" width="7" height="3.6" viewBox="0 0 7 3.6"><path d="M0.4 0.3 L3.5 3.2 L6.6 0.3" fill="none" stroke="#242424" stroke-width="1.3" stroke-linecap="round" stroke-linejoin="round"/></svg>
<svg class="a" style="left:1060px;top:112px;" width="39" height="35" viewBox="0 0 39 35"><rect x="0.7" y="0.7" width="34.6" height="26.6" fill="#fafafa" stroke="#5e5e5e" stroke-width="1.3"/>
<rect x="12" y="9.6" width="23.3" height="17.7" fill="#7ab7ea"/>
<path d="M0.7 9.6 H35.3 M0.7 18.4 H35.3 M12 0.7 V27.3 M23.6 0.7 V27.3" stroke="#5e5e5e" stroke-width="1.1"/>
<path d="M12 9.6 H35.3 M12 18.4 H35.3 M12 9.6 V27.3 M23.6 9.6 V27.3" stroke="#1e70c8" stroke-width="1.1"/><path d="M36.4 10.4 L22 26" stroke="#fff" stroke-width="5.4" stroke-linecap="round"/>
<path d="M37.2 9.6 C38 10.4 37.6 11.6 36.6 12.8 L25 26.4 L21.6 23.6 L34.4 10.4 C35.4 9.4 36.4 9 37.2 9.6 Z" fill="#fafafa" stroke="#5e5e5e" stroke-width="1.2" stroke-linejoin="round"/>
<path d="M9.6 32.2 C14.6 31.6 13.4 25.6 18.6 24.6 C22.6 24 24.8 28.2 22 31 C18.6 34.2 13.2 34.2 9.6 32.2 Z" fill="#3a8ddc"/></svg>
<span class="t" style="left:1026.50px;top:152.00px;font-size:14.7px;letter-spacing:0.216px;">Formatar como</span>
<span class="t" style="left:1051.00px;top:172.00px;font-size:14.7px;letter-spacing:-0.622px;">Tabela</span>
<svg class="a" style="left:1098px;top:176.4px;" width="7" height="3.6" viewBox="0 0 7 3.6"><path d="M0.4 0.3 L3.5 3.2 L6.6 0.3" fill="none" stroke="#242424" stroke-width="1.3" stroke-linecap="round" stroke-linejoin="round"/></svg>
<svg class="a" style="left:1150px;top:112px;" width="39" height="35" viewBox="0 0 39 35"><rect x="0.7" y="0.7" width="34.6" height="26.6" fill="#fafafa" stroke="#5e5e5e" stroke-width="1.3"/>
<path d="M0.7 6.4 H35.3 M0.7 21.6 H35.3 M6.6 0.7 V27.3 M29.4 0.7 V27.3" stroke="#5e5e5e" stroke-width="1.1"/>
<rect x="6.6" y="6.4" width="22.8" height="15.2" fill="#7ab7ea" stroke="#1e70c8" stroke-width="1.3"/><path d="M36.4 10.4 L22 26" stroke="#fff" stroke-width="5.4" stroke-linecap="round"/>
<path d="M37.2 9.6 C38 10.4 37.6 11.6 36.6 12.8 L25 26.4 L21.6 23.6 L34.4 10.4 C35.4 9.4 36.4 9 37.2 9.6 Z" fill="#fafafa" stroke="#5e5e5e" stroke-width="1.2" stroke-linejoin="round"/>
<path d="M9.6 32.2 C14.6 31.6 13.4 25.6 18.6 24.6 C22.6 24 24.8 28.2 22 31 C18.6 34.2 13.2 34.2 9.6 32.2 Z" fill="#3a8ddc"/></svg>
<span class="t" style="left:1136.00px;top:152.00px;font-size:14.7px;letter-spacing:-0.112px;">Estilos de</span>
<span class="t" style="left:1140.50px;top:172.00px;font-size:14.7px;letter-spacing:-0.494px;">Célula</span>
<svg class="a" style="left:1186px;top:176.4px;" width="7" height="3.6" viewBox="0 0 7 3.6"><path d="M0.4 0.3 L3.5 3.2 L6.6 0.3" fill="none" stroke="#242424" stroke-width="1.3" stroke-linecap="round" stroke-linejoin="round"/></svg>
<svg class="a" style="left:1227px;top:108px;" width="21" height="19" viewBox="0 0 21 19"><rect x="0.7" y="0.7" width="18.8" height="16.8" fill="#fafafa" stroke="#5e5e5e" stroke-width="1.2"/>
<path d="M0.7 5.6 H19.5 M0.7 12.6 H19.5 M5.4 0.7 V17.5 M10.2 0.7 V17.5 M15 0.7 V17.5" stroke="#5e5e5e" stroke-width="1"/><rect x="9" y="5.6" width="10.8" height="7" fill="#5aa4e4" stroke="#1e70c8" stroke-width="1"/>
<rect x="0" y="4.6" width="9" height="9" fill="#fff"/><path d="M1 9.1 H10 M4.6 5.6 L1 9.1 L4.6 12.6" fill="none" stroke="#1e8ad6" stroke-width="1.4" stroke-linejoin="round"/></svg>
<span class="t" style="left:1252.00px;top:110.80px;font-size:14.7px;letter-spacing:-0.236px;">Inserir</span>
<svg class="a" style="left:1314px;top:115.2px;" width="7" height="3.6" viewBox="0 0 7 3.6"><path d="M0.4 0.3 L3.5 3.2 L6.6 0.3" fill="none" stroke="#242424" stroke-width="1.3" stroke-linecap="round" stroke-linejoin="round"/></svg>
<svg class="a" style="left:1227px;top:140px;" width="21" height="19" viewBox="0 0 21 19"><rect x="0.7" y="0.7" width="18.8" height="16.8" fill="#fafafa" stroke="#5e5e5e" stroke-width="1.2"/>
<path d="M0.7 5.6 H19.5 M0.7 12.6 H19.5 M5.4 0.7 V17.5 M10.2 0.7 V17.5 M15 0.7 V17.5" stroke="#5e5e5e" stroke-width="1"/><rect x="10" y="4.4" width="10" height="9.6" fill="#fff"/>
<rect x="4.4" y="5.8" width="6.4" height="6.6" fill="#7ab7ea" stroke="#1e70c8" stroke-width="1.4"/><path d="M1 9.1 H4.4" stroke="#1e70c8" stroke-width="1.4"/>
<path d="M13.2 6 L19.2 12.2 M19.2 6 L13.2 12.2" stroke="#e8323a" stroke-width="1.4"/></svg>
<span class="t" style="left:1252.00px;top:142.60px;font-size:14.7px;letter-spacing:-0.280px;">Excluir</span>
<svg class="a" style="left:1317px;top:147.2px;" width="7" height="3.6" viewBox="0 0 7 3.6"><path d="M0.4 0.3 L3.5 3.2 L6.6 0.3" fill="none" stroke="#242424" stroke-width="1.3" stroke-linecap="round" stroke-linejoin="round"/></svg>
<svg class="a" style="left:1227px;top:171px;" width="21" height="20" viewBox="0 0 21 20"><g transform="translate(0,2.6)"><rect x="0.7" y="0.7" width="18.8" height="16.8" fill="#fafafa" stroke="#5e5e5e" stroke-width="1.2"/>
<path d="M0.7 5.6 H19.5 M0.7 12.6 H19.5 M5.4 0.7 V17.5 M10.2 0.7 V17.5 M15 0.7 V17.5" stroke="#5e5e5e" stroke-width="1"/><rect x="5.4" y="5.6" width="9.6" height="7" fill="#7ab7ea" stroke="#1e70c8" stroke-width="1.3"/></g>
<rect x="3.4" y="0" width="13.6" height="4.6" fill="#fff"/><path d="M4.6 2.2 H15.8 M4.6 0.2 V4.2 M15.8 0.2 V4.2" stroke="#1e8ad6" stroke-width="1.2"/></svg>
<span class="t" style="left:1252.00px;top:174.50px;font-size:14.7px;letter-spacing:-0.169px;">Formatar</span>
<svg class="a" style="left:1317px;top:178.6px;" width="7" height="3.6" viewBox="0 0 7 3.6"><path d="M0.4 0.3 L3.5 3.2 L6.6 0.3" fill="none" stroke="#242424" stroke-width="1.3" stroke-linecap="round" stroke-linejoin="round"/></svg>
<svg class="a" style="left:1364px;top:108px;" width="17" height="18" viewBox="0 0 17 18"><path d="M15.4 4 V1 H1.4 L8.6 9 L1.4 17 H15.4 V14" fill="none" stroke="#3b3b3b" stroke-width="1.3" stroke-linejoin="miter"/></svg>
<svg class="a" style="left:1398px;top:115.2px;" width="7" height="3.6" viewBox="0 0 7 3.6"><path d="M0.4 0.3 L3.5 3.2 L6.6 0.3" fill="none" stroke="#242424" stroke-width="1.3" stroke-linecap="round" stroke-linejoin="round"/></svg>
<svg class="a" style="left:1362px;top:140px;" width="21" height="19" viewBox="0 0 21 19"><rect x="0.8" y="0.8" width="18.8" height="16.8" fill="#fafafa" stroke="#5e5e5e" stroke-width="1.4"/><path d="M0.8 3.6 H19.6" stroke="#5e5e5e" stroke-width="1.4"/>
<path d="M10.2 5.6 V14.4 M6.4 10.8 L10.2 14.6 L14 10.8" fill="none" stroke="#1e8ad6" stroke-width="1.4" stroke-linejoin="round"/></svg>
<svg class="a" style="left:1390px;top:148.2px;" width="7" height="3.6" viewBox="0 0 7 3.6"><path d="M0.4 0.3 L3.5 3.2 L6.6 0.3" fill="none" stroke="#242424" stroke-width="1.3" stroke-linecap="round" stroke-linejoin="round"/></svg>
<svg class="a" style="left:1362px;top:171px;" width="21" height="20" viewBox="0 0 21 20"><path d="M11.4 1 L19.6 8.4 L8.4 19 L1 11.6 Z" fill="#fafafa" stroke="#a233ad" stroke-width="1.4" stroke-linejoin="round"/>
<path d="M1 11.6 L5 7.6 L12.4 15 L8.4 19 Z" fill="#d38ad8" stroke="#a233ad" stroke-width="1.3" stroke-linejoin="round"/></svg>
<svg class="a" style="left:1390px;top:180.2px;" width="7" height="3.6" viewBox="0 0 7 3.6"><path d="M0.4 0.3 L3.5 3.2 L6.6 0.3" fill="none" stroke="#242424" stroke-width="1.3" stroke-linecap="round" stroke-linejoin="round"/></svg>
<span class="t" style="left:1437.00px;top:108.20px;font-size:19.6px;color:#1e8ad6;">A</span>
<span class="t" style="left:1437.50px;top:125.60px;font-size:19.6px;color:#3b3b3b;">Z</span>
<svg class="a" style="left:1451px;top:117px;" width="22" height="21" viewBox="0 0 22 21"><path d="M1 1 H20.6 V3.4 L13 11.4 V19.4 H9 V11.4 L1 3.4 Z" fill="#fafafa" stroke="#5e5e5e" stroke-width="1.3" stroke-linejoin="round"/></svg>
<span class="t" style="left:1422.00px;top:152.00px;font-size:14.7px;letter-spacing:-0.285px;">Classificar</span>
<span class="t" style="left:1423.00px;top:172.00px;font-size:14.7px;letter-spacing:-0.173px;">e Filtrar</span>
<svg class="a" style="left:1477px;top:176.4px;" width="7" height="3.6" viewBox="0 0 7 3.6"><path d="M0.4 0.3 L3.5 3.2 L6.6 0.3" fill="none" stroke="#242424" stroke-width="1.3" stroke-linecap="round" stroke-linejoin="round"/></svg>
<svg class="a" style="left:1516px;top:107px;" width="40" height="40" viewBox="0 0 40 40"><circle cx="24.3" cy="14.5" r="12.6" fill="#fafafa" stroke="#4a4a4a" stroke-width="1.3"/><path d="M15 23.8 L2.2 36.6" stroke="#4a4a4a" stroke-width="1.4" stroke-linecap="round"/></svg>
<span class="t" style="left:1500.00px;top:152.00px;font-size:14.7px;letter-spacing:-0.036px;">Localizar e</span>
<span class="t" style="left:1495.00px;top:172.00px;font-size:14.7px;letter-spacing:-0.223px;">Selecionar</span>
<svg class="a" style="left:1568px;top:176.4px;" width="7" height="3.6" viewBox="0 0 7 3.6"><path d="M0.4 0.3 L3.5 3.2 L6.6 0.3" fill="none" stroke="#242424" stroke-width="1.3" stroke-linecap="round" stroke-linejoin="round"/></svg>
<svg class="a" style="left:1627px;top:108px;" width="36" height="36" viewBox="0 0 36 36"><rect x="1" y="1" width="34" height="34" fill="#fafafa" stroke="#e8622a" stroke-width="1.6"/>
<rect x="5" y="5" width="11.4" height="11.4" fill="#fafafa" stroke="#e8622a" stroke-width="1.5"/><rect x="19.6" y="5" width="11.4" height="11.4" fill="#fafafa" stroke="#e8622a" stroke-width="1.5"/>
<rect x="5" y="19.6" width="11.4" height="11.4" fill="#fafafa" stroke="#e8622a" stroke-width="1.5"/><rect x="19.6" y="19.6" width="11.4" height="11.4" fill="#fafafa" stroke="#e8622a" stroke-width="1.5"/></svg>
<span class="t" style="left:1602.50px;top:152.00px;font-size:14.7px;letter-spacing:0.011px;">Suplementos</span>
<svg class="a" style="left:1719px;top:108px;" width="38" height="36" viewBox="0 0 38 36"><defs>
<linearGradient id="cg1" x1="0.3" y1="0" x2="0.1" y2="1"><stop offset="0" stop-color="#2fb4fb"/><stop offset=".25" stop-color="#1394e2"/><stop offset=".55" stop-color="#4db06a"/><stop offset=".85" stop-color="#d8c61c"/><stop offset="1" stop-color="#f6c800"/></linearGradient>
<linearGradient id="cg2" x1="0.7" y1="0" x2="0.3" y2="1"><stop offset="0" stop-color="#a947e8"/><stop offset=".5" stop-color="#ef5590"/><stop offset="1" stop-color="#ffa94a"/></linearGradient>
<linearGradient id="cg3" x1="0" y1="0" x2="0.6" y2="1"><stop offset="0" stop-color="#0a32c8"/><stop offset="1" stop-color="#1e78e0"/></linearGradient>
<linearGradient id="cg4" x1="0" y1="0" x2="0.8" y2="1"><stop offset="0" stop-color="#ff8f44"/><stop offset="1" stop-color="#dc3a30"/></linearGradient></defs>
<path d="M20 1 H24.8 C27.6 1 28.2 4.4 28.8 7 C29.2 8.8 29.8 9.8 31 10.6 H26 C24.4 10.6 23.4 11.2 22.8 13 H17 Z" fill="url(#cg3)"/>
<path d="M8.2 25 H19.6 L17 34.6 H14.4 C11.6 34.6 11 31.6 10.4 29 C10 27.2 9.4 26 8.2 25 Z" fill="url(#cg4)"/>
<path d="M9.6 1 H22.2 Q21 1.6 20.4 3.6 L14.8 23 Q14 25 11.6 25 H4.4 Q0.2 25 1.2 21 L5.2 5.4 Q6.4 1 9.6 1 Z" fill="url(#cg1)"/>
<path d="M26 10.6 H33.4 Q37.8 10.6 36.8 14.8 L32.8 30.2 Q31.6 34.6 28.2 34.6 H15.8 Q17 34 17.6 32 L23.2 12.6 Q24 10.6 26 10.6 Z" fill="url(#cg2)"/></svg>
<span class="t" style="left:1713.50px;top:152.00px;font-size:14.7px;letter-spacing:0.394px;">Copilot</span>
<svg class="a" style="left:1811px;top:110px;" width="34" height="37" viewBox="0 0 34 37"><path d="M21.4 26.4 H4 C2.4 26.4 1.2 25.2 1.2 23.6 V4 C1.2 2.4 2.4 1.2 4 1.2 H15.4 L22.6 8.4 V15.6" fill="none" stroke="#2d6fe0" stroke-width="1.4" stroke-linejoin="round"/>
<path d="M5.4 18.6 C3.6 19.8 5 21.4 7 19.6 C9.6 17.2 11.6 11.6 11.8 7.6 C11.8 6 10.6 6 10.6 7.6 C10.8 11.6 14.4 15.4 18 16.2 C19.8 16.4 19.6 14.8 17.8 14.8 C13.6 14.8 8.6 16.6 5.4 18.6 Z" fill="none" stroke="#2d6fe0" stroke-width="1"/>
<g transform="rotate(-42 23.5 26.5)" fill="none" stroke="#2d6fe0" stroke-width="1.5"><rect x="12.6" y="23.4" width="11.6" height="6.2" rx="3.1"/><rect x="22.6" y="23.4" width="11.6" height="6.2" rx="3.1"/></g></svg>
<span class="t" style="left:1810.50px;top:152.00px;font-size:14.7px;letter-spacing:-0.420px;">Crie</span>
<span class="t" style="left:1797.50px;top:172.00px;font-size:14.7px;letter-spacing:-0.677px;">um PDF</span>
</section>
<section id="formula-bar">
<div class="a" style="left:0px;top:222px;width:35px;height:48px;background:#f1f5f2;"></div>
<div class="a" style="left:0px;top:224px;width:4px;height:46px;background:repeating-linear-gradient(180deg,#1f7446 0 7px,#fff 7px 9px)"></div>
<div class="a" style="left:6px;top:222px;width:4px;height:48px;background:repeating-linear-gradient(180deg,#1f7446 0 7px,#fff 7px 9px)"></div>
<div class="a" style="left:12px;top:224px;width:4px;height:46px;background:repeating-linear-gradient(180deg,#1f7446 0 7px,#fff 7px 9px)"></div>
<div class="a" style="left:18px;top:222px;width:4px;height:48px;background:repeating-linear-gradient(180deg,#1f7446 0 7px,#fff 7px 9px)"></div>
<div class="a" style="left:24px;top:224px;width:4px;height:46px;background:repeating-linear-gradient(180deg,#1f7446 0 7px,#fff 7px 9px)"></div>
<div class="a" style="left:30px;top:222px;width:4px;height:48px;background:repeating-linear-gradient(180deg,#1f7446 0 7px,#fff 7px 9px)"></div>
<div class="a" style="left:11px;top:233px;width:166px;height:28px;border-radius:5px;background:#fff;box-shadow:0 0 0 1px #d9dcda"></div>
<span class="t" style="left:16.60px;top:239.00px;font-size:16.5px;letter-spacing:-0.916px;">D3</span>
<svg class="a" style="left:158px;top:245px;" width="13" height="7" viewBox="0 0 13 7"><path d="M0.4 0.3 L6.5 6.6 L12.6 0.3" fill="none" stroke="#242424" stroke-width="1.3" stroke-linecap="round" stroke-linejoin="round"/></svg>
<div class="a" style="left:189px;top:241px;width:2.4px;height:2.4px;background:#3b3b3b;"></div>
<div class="a" style="left:189px;top:246px;width:2.4px;height:2.4px;background:#3b3b3b;"></div>
<div class="a" style="left:189px;top:251px;width:2.4px;height:2.4px;background:#3b3b3b;"></div>
<div class="a" style="left:204px;top:233px;width:105px;height:28px;border-radius:5px;background:#fff;box-shadow:0 0 0 1px #d9dcda"></div>
<svg class="a" style="left:212px;top:240px;" width="15" height="15" viewBox="0 0 15 15"><path d="M0.8 0.8 L14.2 14.2 M14.2 0.8 L0.8 14.2" stroke="#b5b5b5" stroke-width="1.3"/></svg>
<svg class="a" style="left:239px;top:240px;" width="21" height="15" viewBox="0 0 21 15"><path d="M0.8 8 L6.6 13.8 L20.2 0.8" fill="none" stroke="#b5b5b5" stroke-width="1.3"/></svg>
<span class="t" style="left:271.00px;top:237.20px;font-size:19.5px;font-weight:700;color:#3b3b3b;font-family:'Liberation Serif', serif;font-style:italic;letter-spacing:0.006px;">fx</span>
<svg class="a" style="left:296px;top:245.5px;" width="11" height="6" viewBox="0 0 11 6"><path d="M0.4 0.3 L5.5 5.6 L10.6 0.3" fill="none" stroke="#8a8a8a" stroke-width="1.2" stroke-linecap="round" stroke-linejoin="round"/></svg>
<div class="a" style="left:316px;top:233px;width:1593px;height:28px;border-radius:5px;background:#fff;box-shadow:0 0 0 1px #d9dcda"></div>
<span class="t" style="left:327.50px;top:239.00px;font-size:16.5px;letter-spacing:-0.244px;">Feedback</span>
<svg class="a" style="left:1892px;top:243px;" width="13" height="7" viewBox="0 0 13 7"><path d="M0.4 0.3 L6.5 6.6 L12.6 0.3" fill="none" stroke="#242424" stroke-width="1.3" stroke-linecap="round" stroke-linejoin="round"/></svg>
</section>
<main id="sheet">
<div class="a" style="left:0px;top:270px;width:1894px;height:26px;background:#f0f0f0;"></div>
<div class="a" style="left:0px;top:296px;width:37px;height:657px;background:#f0f0f0;"></div>
<div class="a" style="left:37px;top:296px;width:1857px;height:657px;background:#fff;"></div>
<div class="a" style="left:0px;top:295px;width:1894px;height:1px;background:#a6a6a6;"></div>
<div class="a" style="left:36px;top:296px;width:1px;height:657px;background:#a6a6a6;"></div>
<div class="a" style="left:36px;top:270px;width:1px;height:25px;background:#dcdcdc;"></div>
<svg class="a" style="left:14px;top:273px;" width="20" height="20" viewBox="0 0 20 20"><path d="M19 1.4 V19 H1.4 Z" fill="#dcdcdc"/></svg>
<div class="a" style="left:553px;top:270px;width:490px;height:25px;background:#e1e1e1;"></div>
<div class="a" style="left:552px;top:294px;width:491px;height:2px;background:#107c41;"></div>
<span class="t" style="left:41.00px;top:275.00px;font-size:18px;color:#3b3b3b;">A</span>
<div class="a" style="left:57px;top:270px;width:1px;height:25px;background:#d6d6d6;"></div>
<span class="t" style="left:187.00px;top:275.00px;font-size:18px;color:#3b3b3b;">B</span>
<div class="a" style="left:329px;top:270px;width:1px;height:25px;background:#d6d6d6;"></div>
<span class="t" style="left:434.50px;top:275.00px;font-size:18px;color:#3b3b3b;">C</span>
<div class="a" style="left:552px;top:270px;width:1px;height:25px;background:#d6d6d6;"></div>
<span class="t" style="left:790.50px;top:275.00px;font-size:18px;color:#107c41;">D</span>
<div class="a" style="left:1042px;top:270px;width:1px;height:25px;background:#d6d6d6;"></div>
<span class="t" style="left:1080.00px;top:275.00px;font-size:18px;color:#3b3b3b;">E</span>
<div class="a" style="left:1130px;top:270px;width:1px;height:25px;background:#d6d6d6;"></div>
<span class="t" style="left:1168.50px;top:275.00px;font-size:18px;color:#3b3b3b;">F</span>
<div class="a" style="left:1218px;top:270px;width:1px;height:25px;background:#d6d6d6;"></div>
<span class="t" style="left:1256.00px;top:275.00px;font-size:18px;color:#3b3b3b;">G</span>
<div class="a" style="left:1306px;top:270px;width:1px;height:25px;background:#d6d6d6;"></div>
<span class="t" style="left:1344.00px;top:275.00px;font-size:18px;color:#3b3b3b;">H</span>
<div class="a" style="left:1394px;top:270px;width:1px;height:25px;background:#d6d6d6;"></div>
<span class="t" style="left:1436.00px;top:275.00px;font-size:18px;color:#3b3b3b;">I</span>
<div class="a" style="left:1482px;top:270px;width:1px;height:25px;background:#d6d6d6;"></div>
<span class="t" style="left:1522.50px;top:275.00px;font-size:18px;color:#3b3b3b;">J</span>
<div class="a" style="left:1570px;top:270px;width:1px;height:25px;background:#d6d6d6;"></div>
<span class="t" style="left:1608.00px;top:275.00px;font-size:18px;color:#3b3b3b;">K</span>
<div class="a" style="left:1658px;top:270px;width:1px;height:25px;background:#d6d6d6;"></div>
<span class="t" style="left:1697.00px;top:275.00px;font-size:18px;color:#3b3b3b;">L</span>
<div class="a" style="left:1746px;top:270px;width:1px;height:25px;background:#d6d6d6;"></div>
<span class="t" style="left:1783.00px;top:275.00px;font-size:18px;color:#3b3b3b;">M</span>
<div class="a" style="left:1834px;top:270px;width:1px;height:25px;background:#d6d6d6;"></div>
<span class="t" style="left:1872.00px;top:275.00px;font-size:18px;color:#3b3b3b;">N</span>
<div class="a" style="left:0px;top:348px;width:36px;height:39px;background:#e1e1e1;"></div>
<div class="a" style="left:35px;top:348px;width:2px;height:40px;background:#107c41;"></div>
<div class="a" style="left:0px;top:321px;width:36px;height:1px;background:#d6d6d6;"></div>
<span class="t" style="left:12.50px;top:300.60px;font-size:18px;color:#3b3b3b;">1</span>
<div class="a" style="left:0px;top:347px;width:36px;height:1px;background:#d6d6d6;"></div>
<span class="t" style="left:13.00px;top:326.60px;font-size:18px;color:#3b3b3b;">2</span>
<div class="a" style="left:0px;top:387px;width:36px;height:1px;background:#d6d6d6;"></div>
<span class="t" style="left:13.00px;top:365.60px;font-size:18px;color:#107c41;">3</span>
<div class="a" style="left:0px;top:440px;width:36px;height:1px;background:#d6d6d6;"></div>
<span class="t" style="left:13.00px;top:418.60px;font-size:18px;color:#3b3b3b;">4</span>
<div class="a" style="left:0px;top:493px;width:36px;height:1px;background:#d6d6d6;"></div>
<span class="t" style="left:13.00px;top:471.60px;font-size:18px;color:#3b3b3b;">5</span>
<div class="a" style="left:0px;top:546px;width:36px;height:1px;background:#d6d6d6;"></div>
<span class="t" style="left:13.00px;top:524.60px;font-size:18px;color:#3b3b3b;">6</span>
<div class="a" style="left:0px;top:573px;width:36px;height:1px;background:#d6d6d6;"></div>
<span class="t" style="left:13.00px;top:551.60px;font-size:18px;color:#3b3b3b;">7</span>
<div class="a" style="left:0px;top:626px;width:36px;height:1px;background:#d6d6d6;"></div>
<span class="t" style="left:13.00px;top:604.60px;font-size:18px;color:#3b3b3b;">8</span>
<div class="a" style="left:0px;top:679px;width:36px;height:1px;background:#d6d6d6;"></div>
<span class="t" style="left:13.00px;top:657.60px;font-size:18px;color:#3b3b3b;">9</span>
<div class="a" style="left:0px;top:732px;width:36px;height:1px;background:#d6d6d6;"></div>
<span class="t" style="left:7.49px;top:710.60px;font-size:18px;color:#3b3b3b;">10</span>
<div class="a" style="left:0px;top:785px;width:36px;height:1px;background:#d6d6d6;"></div>
<span class="t" style="left:8.16px;top:763.60px;font-size:18px;color:#3b3b3b;">11</span>
<div class="a" style="left:0px;top:812px;width:36px;height:1px;background:#d6d6d6;"></div>
<span class="t" style="left:7.49px;top:790.60px;font-size:18px;color:#3b3b3b;">12</span>
<div class="a" style="left:0px;top:838px;width:36px;height:1px;background:#d6d6d6;"></div>
<span class="t" style="left:7.49px;top:817.60px;font-size:18px;color:#3b3b3b;">13</span>
<div class="a" style="left:0px;top:864px;width:36px;height:1px;background:#d6d6d6;"></div>
<span class="t" style="left:7.49px;top:843.60px;font-size:18px;color:#3b3b3b;">14</span>
<div class="a" style="left:0px;top:890px;width:36px;height:1px;background:#d6d6d6;"></div>
<span class="t" style="left:7.49px;top:869.60px;font-size:18px;color:#3b3b3b;">15</span>
<div class="a" style="left:0px;top:916px;width:36px;height:1px;background:#d6d6d6;"></div>
<span class="t" style="left:7.49px;top:895.60px;font-size:18px;color:#3b3b3b;">16</span>
<div class="a" style="left:0px;top:942px;width:36px;height:1px;background:#d6d6d6;"></div>
<span class="t" style="left:7.49px;top:921.60px;font-size:18px;color:#3b3b3b;">17</span>
<div class="a" style="left:0;top:943px;width:36px;height:10px;overflow:hidden"><span style="position:absolute;left:8px;top:6px;font-size:18px;line-height:1;color:#3b3b3b">18</span></div>
<div id="cells">
<div class="a" style="left:58px;top:349px;width:983px;height:37px;background:#1f3763;"></div>
<div class="a" style="left:56px;top:347px;width:987px;height:2px;background:#bfbfbf;"></div>
<div class="a" style="left:56px;top:386px;width:987px;height:2px;background:#bfbfbf;"></div>
<div class="a" style="left:56px;top:439px;width:987px;height:2px;background:#bfbfbf;"></div>
<div class="a" style="left:56px;top:492px;width:987px;height:2px;background:#bfbfbf;"></div>
<div class="a" style="left:56px;top:545px;width:987px;height:2px;background:#bfbfbf;"></div>
<div class="a" style="left:56px;top:572px;width:987px;height:2px;background:#bfbfbf;"></div>
<div class="a" style="left:56px;top:625px;width:987px;height:2px;background:#bfbfbf;"></div>
<div class="a" style="left:56px;top:678px;width:987px;height:2px;background:#bfbfbf;"></div>
<div class="a" style="left:56px;top:731px;width:987px;height:2px;background:#bfbfbf;"></div>
<div class="a" style="left:56px;top:784px;width:987px;height:2px;background:#bfbfbf;"></div>
<div class="a" style="left:56px;top:811px;width:987px;height:2px;background:#bfbfbf;"></div>
<div class="a" style="left:56px;top:347px;width:2px;height:466px;background:#bfbfbf;"></div>
<div class="a" style="left:328px;top:347px;width:2px;height:466px;background:#bfbfbf;"></div>
<div class="a" style="left:551px;top:347px;width:2px;height:466px;background:#bfbfbf;"></div>
<div class="a" style="left:1041px;top:347px;width:2px;height:466px;background:#bfbfbf;"></div>
<span class="t" style="left:83.50px;top:358.80px;font-size:18.4px;font-weight:700;color:#fff;letter-spacing:0.432px;">Desempenho / potencial</span>
<span class="t" style="left:385.00px;top:358.80px;font-size:18.4px;font-weight:700;color:#fff;letter-spacing:-0.444px;">Classificação</span>
<span class="t" style="left:754.50px;top:358.80px;font-size:18.4px;font-weight:700;color:#fff;letter-spacing:-0.016px;">Feedback</span>
<span class="t" style="left:93.00px;top:404.50px;font-size:18.9px;color:#000;">Abaixo do esperadoAlto</span>
<span class="t" style="left:134.00px;top:457.50px;font-size:18.9px;color:#000;letter-spacing:0.172px;">ModeradoAlto</span>
<span class="t" style="left:96.00px;top:510.50px;font-size:18.9px;color:#000;letter-spacing:0.009px;">Acima do esperadoAlto</span>
<span class="t" style="left:83.00px;top:550.60px;font-size:18.9px;color:#000;letter-spacing:0.069px;">Abaixo do esperadoMédio</span>
<span class="t" style="left:123.50px;top:590.50px;font-size:18.9px;color:#000;letter-spacing:0.291px;">ModeradoMédio</span>
<span class="t" style="left:86.00px;top:643.70px;font-size:18.9px;color:#000;letter-spacing:0.061px;">Acima do esperadoMédio</span>
<span class="t" style="left:86.00px;top:696.70px;font-size:18.9px;color:#000;letter-spacing:-0.036px;">Abaixo do esperadoBaixo</span>
<span class="t" style="left:126.50px;top:749.50px;font-size:18.9px;color:#000;letter-spacing:0.141px;">ModeradoBaixo</span>
<span class="t" style="left:89.00px;top:789.60px;font-size:18.9px;color:#000;letter-spacing:-0.024px;">Acima do esperadoBaixo</span>
<span class="t" style="left:409.00px;top:404.50px;font-size:18.9px;color:#000;letter-spacing:-0.309px;">Enigma</span>
<span class="t" style="left:377.00px;top:457.50px;font-size:18.9px;color:#000;letter-spacing:0.010px;">Forte Potencial</span>
<span class="t" style="left:410.00px;top:510.50px;font-size:18.9px;color:#000;letter-spacing:0.265px;">Talento</span>
<span class="t" style="left:386.00px;top:550.60px;font-size:18.9px;color:#000;letter-spacing:0.085px;">Questionável</span>
<span class="t" style="left:389.00px;top:590.50px;font-size:18.9px;color:#000;letter-spacing:0.330px;">Mantenedor</span>
<span class="t" style="left:360.00px;top:643.70px;font-size:18.9px;color:#000;letter-spacing:-0.013px;">Forte Desempenho</span>
<span class="t" style="left:418.00px;top:696.70px;font-size:18.9px;color:#000;letter-spacing:-0.432px;">Risco</span>
<span class="t" style="left:416.00px;top:749.50px;font-size:18.9px;color:#000;letter-spacing:-0.599px;">Eficaz</span>
<span class="t" style="left:377.00px;top:789.60px;font-size:18.9px;color:#000;letter-spacing:0.329px;">Comprometido</span>
<span class="t" style="left:591.80px;top:391.80px;font-size:18.9px;color:#000;letter-spacing:0.088px;">Avaliar se não existem interferências internas ou</span>
<span class="t" style="left:701.50px;top:417.40px;font-size:18.9px;color:#000;letter-spacing:0.165px;">externas influenciando</span>
<span class="t" style="left:587.40px;top:444.90px;font-size:18.9px;color:#000;letter-spacing:0.152px;">Proporcionar novas oportunidades de liderança e</span>
<span class="t" style="left:634.40px;top:470.70px;font-size:18.9px;color:#000;letter-spacing:0.157px;">verificar o desempenho no curto prazo</span>
<span class="t" style="left:592.70px;top:497.90px;font-size:18.9px;color:#000;letter-spacing:0.083px;">Dar mais atribuições e preparar para funções de</span>
<span class="t" style="left:758.40px;top:523.80px;font-size:18.9px;color:#000;letter-spacing:0.106px;">liderança</span>
<span class="t" style="left:593.40px;top:550.90px;font-size:18.9px;color:#000;letter-spacing:0.091px;">Rever atribuições e motivação com função atual</span>
<span class="t" style="left:598.40px;top:578.00px;font-size:18.9px;color:#000;letter-spacing:0.214px;">Manter atribuições e investir em treinamento e</span>
<span class="t" style="left:725.20px;top:603.70px;font-size:18.9px;color:#000;letter-spacing:0.239px;">desenvolvimento</span>
<span class="t" style="left:578.70px;top:631.20px;font-size:18.9px;color:#000;letter-spacing:0.101px;">Realizar plano de acompanhamento individual para</span>
<span class="t" style="left:705.40px;top:656.80px;font-size:18.9px;color:#000;letter-spacing:0.104px;">desenvolver potencial</span>
<span class="t" style="left:557.40px;top:683.90px;font-size:18.9px;color:#000;letter-spacing:0.137px;">Avaliar possibilidade de movimentação para nível menor</span>
<span class="t" style="left:727.30px;top:710.10px;font-size:18.9px;color:#000;letter-spacing:0.220px;">ou desligamento</span>
<span class="t" style="left:605.00px;top:737.00px;font-size:18.9px;color:#000;letter-spacing:-0.070px;">Analisar necessidade de especialização ou de</span>
<span class="t" style="left:688.70px;top:762.80px;font-size:18.9px;color:#000;letter-spacing:0.295px;">movimentação horizontal</span>
<span class="t" style="left:626.80px;top:789.60px;font-size:18.9px;color:#000;letter-spacing:0.117px;">Manter atribuições e rever remuneração</span>
<div class="a" style="left:551px;top:347px;width:493px;height:42px;border:2px solid #107c41;box-shadow:inset 0 0 0 1px #fff"></div>
<div class="a" style="left:1039px;top:384px;width:6px;height:6px;background:#fff"></div>
<div class="a" style="left:1040px;top:385px;width:5px;height:5px;background:#1e7b45"></div>
</div>
<div id="vscroll">
<div class="a" style="left:1897px;top:270px;width:21px;height:685px;border-radius:10.5px;background:#f3f3f3"></div>
<svg class="a" style="left:1902px;top:276px;" width="11" height="10" viewBox="0 0 11 10"><path d="M5.5 0.8 Q6 0.4 6.4 1 L10.6 7.8 Q11 8.8 10 8.8 H1 Q0 8.8 0.4 7.8 L4.6 1 Q5 0.4 5.5 0.8 Z" fill="#707070"/></svg>
<div class="a" style="left:1902px;top:291px;width:11px;height:30px;border-radius:5.5px;background:#707070"></div>
<svg class="a" style="left:1902px;top:941px;" width="11" height="10" viewBox="0 0 11 10"><path d="M5.5 9.2 Q6 9.6 6.4 9 L10.6 2.2 Q11 1.2 10 1.2 H1 Q0 1.2 0.4 2.2 L4.6 9 Q5 9.6 5.5 9.2 Z" fill="#707070"/></svg>
</div>
</main>
<nav id="sheet-tabs">
<div class="a" style="left:0;top:953px;width:1920px;height:40px;background:linear-gradient(90deg,#e3e9e5 0%,#e5e9e6 18%,#e6e6e6 30%,#e5e5e5 70%,#e6ebe9 74%,#e5ebe8 96%,#e4e6e5 100%)"></div>
<div class="a" style="left:0;top:953px;width:1895px;height:8px;background:#fff"></div>
<div class="a" style="left:0;top:953px;width:362px;height:8px;border-radius:0 6px 0 0;background:linear-gradient(90deg,#e3e9e5 0%,#e5e9e6 95%,#e6e8e7 100%)"></div>
<div class="a" style="left:548px;top:953px;width:1347px;height:8px;border-radius:6px 0 0 0;background:linear-gradient(90deg,#e6e6e6 0%,#e5e5e5 58%,#e6ebe9 64%,#e5ebe8 100%)"></div>
<div class="a" style="left:362px;top:953px;width:186px;height:35px;border-radius:0 0 6px 6px;background:#fff"></div>
<svg class="a" style="left:32px;top:966px;" width="8" height="12" viewBox="0 0 8 12"><path d="M7 0.5 L0.8 6 L7 11.5" fill="none" stroke="#8c8f8d" stroke-width="1.3" stroke-linecap="butt" stroke-linejoin="miter"/></svg>
<svg class="a" style="left:73px;top:966px;" width="8" height="12" viewBox="0 0 8 12"><path d="M0.4 0.5 L6.6 6 L0.4 11.5" fill="none" stroke="#8c8f8d" stroke-width="1.3" stroke-linecap="butt" stroke-linejoin="miter"/></svg>
<span class="t" style="left:153.50px;top:966.20px;font-size:17px;letter-spacing:-0.247px;">Cadastros</span>
<span class="t" style="left:265.50px;top:966.20px;font-size:17px;letter-spacing:-0.056px;">Avaliação</span>
<span class="t" style="left:373.00px;top:963.80px;font-size:17.6px;font-weight:700;color:#1f1f1f;letter-spacing:-0.268px;">Definições Nine Box</span>
<div class="a" style="left:372px;top:982.5px;width:166px;height:2.2px;background:#107c41;"></div>
<div class="a" style="left:246px;top:961px;width:1px;height:24px;background:#cfd3d0;"></div>
<div class="a" style="left:356px;top:961px;width:1px;height:24px;background:#cfd3d0;"></div>
<div class="a" style="left:553px;top:961px;width:1px;height:24px;background:#cfd3d0;"></div>
<svg class="a" style="left:606px;top:965px;" width="15" height="15" viewBox="0 0 15 15"><path d="M7.5 0.6 V14.4 M0.6 7.5 H14.4" stroke="#2b2b2b" stroke-width="1.4"/></svg>
<div class="a" style="left:1388px;top:967px;width:2.4px;height:2.4px;background:#3b3b3b;"></div>
<div class="a" style="left:1388px;top:972px;width:2.4px;height:2.4px;background:#3b3b3b;"></div>
<div class="a" style="left:1388px;top:977px;width:2.4px;height:2.4px;background:#3b3b3b;"></div>
<div class="a" style="left:1409px;top:962px;width:487px;height:21px;border-radius:10.5px;background:#f3f3f3"></div>
<svg class="a" style="left:1414px;top:967px;" width="10" height="11" viewBox="0 0 10 11"><path d="M0.8 5.5 Q0.4 5 1 4.6 L8 0.4 Q9.2 0 9.2 1 V10 Q9.2 11 8 10.6 L1 6.4 Q0.4 6 0.8 5.5 Z" fill="#707070"/></svg>
<div class="a" style="left:1430px;top:967px;width:438px;height:11px;border-radius:5.5px;background:#707070"></div>
<svg class="a" style="left:1882px;top:967px;" width="10" height="11" viewBox="0 0 10 11"><path d="M9.2 5.5 Q9.6 5 9 4.6 L2 0.4 Q0.8 0 0.8 1 V10 Q0.8 11 2 10.6 L9 6.4 Q9.6 6 9.2 5.5 Z" fill="#707070"/></svg>
</nav>
<footer id="statusbar">
<div class="a" style="left:0px;top:993px;width:1920px;height:26px;background:#f3f3f3;"></div>
<div class="a" style="left:0px;top:993px;width:1920px;height:1px;background:#f9f9f9;"></div>
<span class="t" style="left:13.50px;top:1001.00px;font-size:13.4px;color:#3b3b3b;letter-spacing:-0.101px;">Pronto</span>
<svg class="a" style="left:78px;top:999px;" width="19" height="18" viewBox="0 0 19 18"><rect x="0.7" y="0.8" width="17.4" height="13.8" fill="#f3f3f3" stroke="#3b3b3b" stroke-width="1.4"/><path d="M0.7 3.6 H18.1" stroke="#3b3b3b" stroke-width="1.4"/>
<path d="M3 7.4 H7 M3 10 H6 M3 12.6 H6" stroke="#4a4a4a" stroke-width="1.1"/>
<circle cx="12.6" cy="11.4" r="5" fill="#f3f3f3" stroke="#3b3b3b" stroke-width="1.4"/><circle cx="12.6" cy="11.4" r="2.3" fill="#2b2b2b"/></svg>
<svg class="a" style="left:118px;top:998px;" width="19" height="20" viewBox="0 0 19 20"><circle cx="8.2" cy="3" r="2.1" fill="none" stroke="#2b2b2b" stroke-width="1.3"/>
<path d="M1.4 5 C3 7.4 5.4 7.4 6.2 7.6 V11 L3.6 17.4 C3.2 18.6 4.8 19 5.4 18 L8.2 12.4 L9.4 14.6 M15 5 C13.4 7.4 11 7.4 10.2 7.6 V10.2 M6.2 7.6 H10.2" fill="none" stroke="#2b2b2b" stroke-width="1.4" stroke-linecap="round" stroke-linejoin="round"/>
<path d="M10.6 11.6 L17.8 18.8 M17.8 11.6 L10.6 18.8" stroke="#2b2b2b" stroke-width="1.3"/></svg>
<span class="t" style="left:140.50px;top:1001.00px;font-size:13.4px;font-weight:700;color:#2b2b2b;letter-spacing:-0.380px;">Acessibilidade: investigar</span>
<svg class="a" style="left:1383px;top:998px;" width="20" height="19" viewBox="0 0 20 19"><path d="M8 11.6 H1 V1 H17.4 V7" fill="none" stroke="#3b3b3b" stroke-width="1.3"/><path d="M2.4 14.2 H7" stroke="#3b3b3b" stroke-width="1.3"/>
<circle cx="12.6" cy="12.6" r="3.6" fill="none" stroke="#3b3b3b" stroke-width="1.4" stroke-dasharray="2 1.1"/><circle cx="12.6" cy="12.6" r="1.3" fill="#3b3b3b"/></svg>
<span class="t" style="left:1403.50px;top:1001.00px;font-size:13.4px;color:#3b3b3b;letter-spacing:-0.229px;">Exibir Configurações</span>
<div class="a" style="left:1548px;top:994px;width:50px;height:25px;background:#dedede;"></div>
<svg class="a" style="left:1564px;top:998px;" width="18" height="17" viewBox="0 0 18 17"><rect x="0.8" y="0.8" width="15.6" height="15" fill="none" stroke="#3b3b3b" stroke-width="1.5"/><path d="M6 0.8 V15.8 M11.2 0.8 V15.8 M0.8 5.8 H16.4 M0.8 10.8 H16.4" stroke="#3b3b3b" stroke-width="1.3"/></svg>
<svg class="a" style="left:1614px;top:998px;" width="18" height="17" viewBox="0 0 18 17"><rect x="0.8" y="0.8" width="16" height="15" fill="none" stroke="#3b3b3b" stroke-width="1.4"/><rect x="4.4" y="4.2" width="8.8" height="8.2" fill="none" stroke="#3b3b3b" stroke-width="1.1"/><path d="M6.2 6.8 H11.4 M6.2 9.6 H11.4" stroke="#3b3b3b" stroke-width="1"/></svg>
<svg class="a" style="left:1664px;top:998px;" width="18" height="17" viewBox="0 0 18 17"><rect x="0.8" y="0.8" width="16" height="15" fill="none" stroke="#3b3b3b" stroke-width="1.4"/><path d="M4.6 0.8 V8.2 H16.8 M10.4 0.8 V8.2" fill="none" stroke="#3b3b3b" stroke-width="1.2"/></svg>
<div class="a" style="left:1705px;top:1006px;width:10px;height:1.2px;background:#3b3b3b;"></div>
<div class="a" style="left:1721px;top:1006.4px;width:125px;height:1px;background:#6a6a6a;"></div>
<div class="a" style="left:1781px;top:1000px;width:6px;height:14px;background:#5e5e5e;"></div>
<svg class="a" style="left:1852px;top:1001px;" width="11" height="11" viewBox="0 0 11 11"><path d="M5.5 0.4 V10.6 M0.4 5.5 H10.6" stroke="#3b3b3b" stroke-width="1.2"/></svg>
<span class="t" style="left:1878.50px;top:1001.00px;font-size:13.4px;color:#3b3b3b;letter-spacing:-1.281px;">100%</span>
</footer>
</body>
</html>
